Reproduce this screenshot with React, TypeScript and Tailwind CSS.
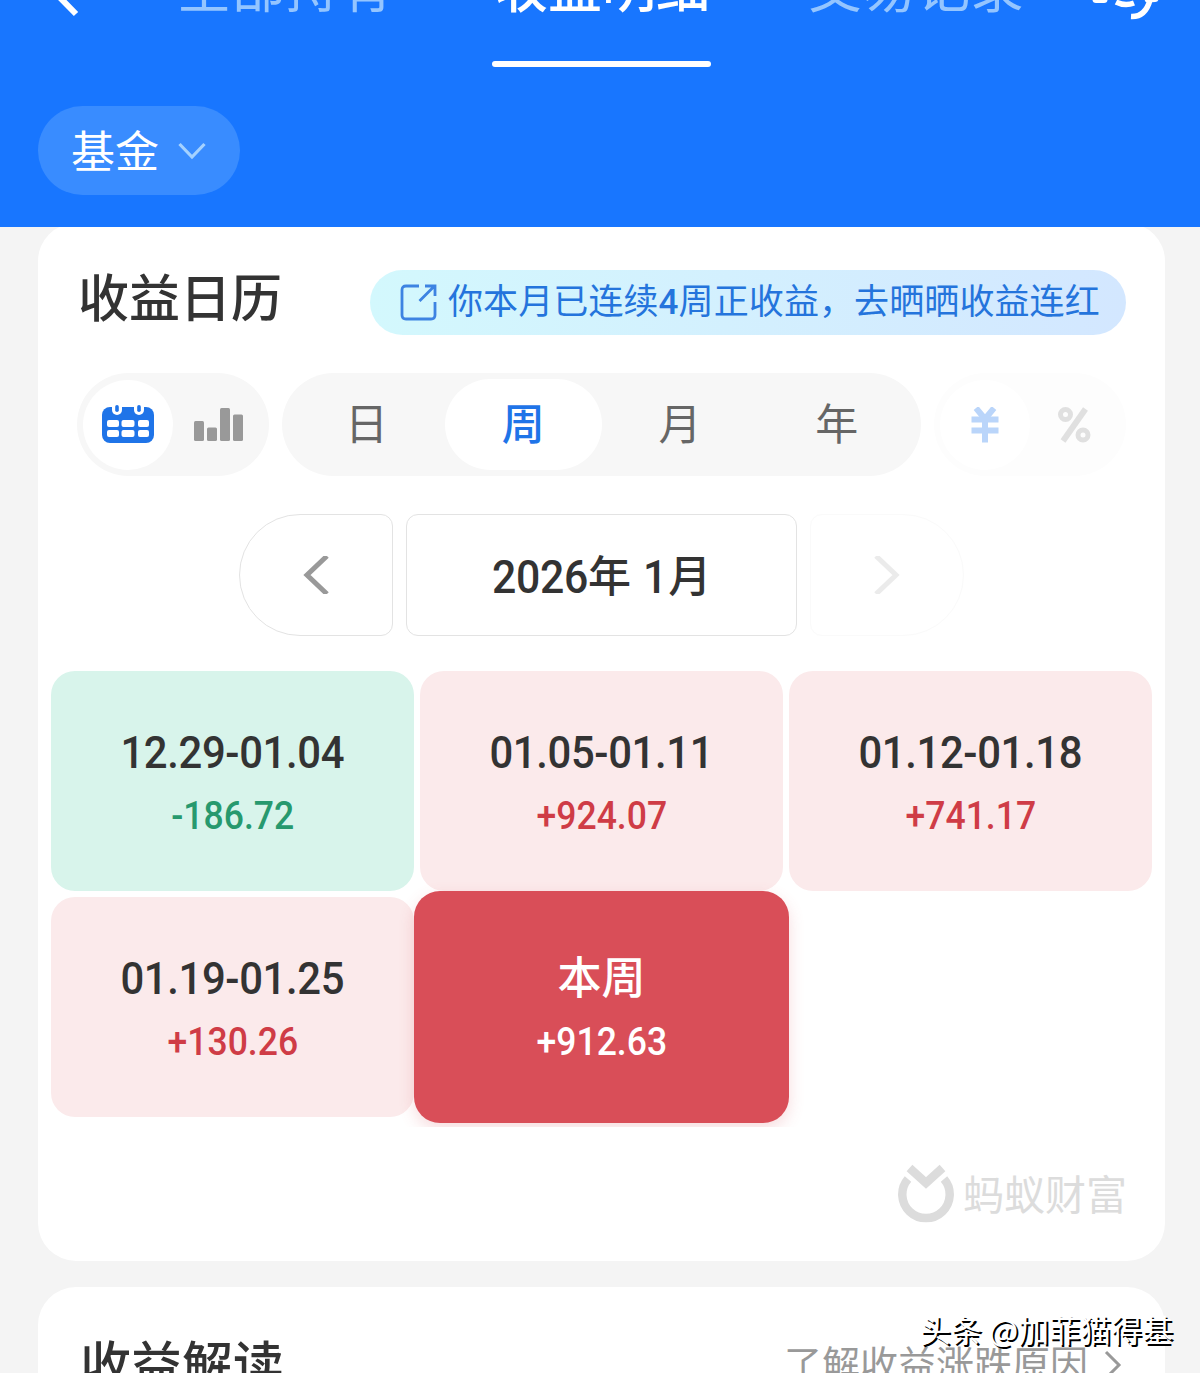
// App.tsx

import clsx from 'clsx';

interface Week {
  label: string;
  value: string;
  trend: 'up' | 'down' | 'current';
}

const WEEKS: Week[] = [
  { label: '12.29-01.04', value: '-186.72', trend: 'down' },
  { label: '01.05-01.11', value: '+924.07', trend: 'up' },
  { label: '01.12-01.18', value: '+741.17', trend: 'up' },
  { label: '01.19-01.25', value: '+130.26', trend: 'up' },
  { label: '本周', value: '+912.63', trend: 'current' },
];

const PERIODS = ['日', '周', '月', '年'];

function Header() {
  return (
    <header className="relative z-10 h-[227px] shrink-0 overflow-hidden bg-[#1876ff]">
      <div className="-mt-[42px] flex h-[54px] text-[54px] leading-none whitespace-nowrap">
        <svg className="mt-[9px] ml-[34px] h-[54px] w-[48px] shrink-0" viewBox="0 0 48 54" fill="none">
          <path d="M42 -2 L18 22.500 L42 47" stroke="#fff" strokeWidth="6" />
        </svg>
        <span className="ml-[95px] w-[216px] text-[#94c5ff]">全部持有</span>
        <span className="ml-[101px] w-[216px] font-medium text-white">收益明细</span>
        <span className="ml-[98px] w-[216px] text-[#94c5ff]">交易记录</span>
        <svg className="mt-[2px] ml-[64px] h-[62px] w-[72px] shrink-0 overflow-visible" viewBox="0 0 72 62" fill="none" stroke="#fff" strokeLinecap="round">
          <path d="M12 36 V20 A24 24 0 0 1 60 20 V36" strokeWidth="6" />
          <path d="M8 39.500 H16" strokeWidth="7" />
          <path d="M28 42 Q37 46.500 46 43" strokeWidth="5.500" strokeLinecap="butt" />
          <path d="M43 56.500 C53 57 59 51 62 40" strokeWidth="5.500" strokeLinecap="butt" />
          <path d="M60 39 L67 38.500" strokeWidth="7" />
        </svg>
      </div>
      <div className="mt-[49px] ml-[492px] h-[6px] w-[219px] rounded-full bg-white" />
      <button className="mt-[39px] ml-[38px] flex h-[89px] w-[202px] items-center rounded-full bg-[#398cff] pl-[33px] text-[44px] leading-none text-white">
        <span className="-mt-[4px]">基金</span>
        <svg className="ml-[19px] h-[18px] w-[28px]" viewBox="0 0 28 18" fill="none">
          <path d="M1.500 2 L14 15 L26.500 2" stroke="#a5d2ff" strokeWidth="3.200" />
        </svg>
      </button>
    </header>
  );
}

function ShareBanner() {
  return (
    <button className="flex h-[65px] w-[756px] items-center rounded-full bg-linear-to-r from-[#d3f8fd] to-[#d3e7ff] pl-[30px] text-[35px] leading-none whitespace-nowrap text-[#2474dc]">
      <svg className="mr-[11px] h-[37px] w-[37px]" viewBox="0 0 37 37" fill="none" stroke="#3d83e2" strokeWidth="2.800">
        <path d="M19 2 H6 Q2 2 2 6 V31 Q2 35 6 35 H31 Q35 35 35 31 V18" />
        <path d="M19.500 17 L34.500 2 M25 2 H35 V12" />
      </svg>
      <span className="-mt-[4px] tracking-[0.1px]">
        你本月已连续<span className="font-['Roboto'] font-medium">4</span>周正收益，去晒晒收益连红
      </span>
    </button>
  );
}

function CalendarIcon() {
  return (
    <svg className="h-[40px] w-[52px]" viewBox="0 0 52 40">
      <rect x="0" y="3" width="52" height="36" rx="8" fill="#1f74e8" />
      <g fill="#fff">
        <rect x="10" y="-3" width="10" height="14" rx="5" />
        <rect x="32" y="-3" width="10" height="14" rx="5" />
        <rect x="5" y="16" width="12" height="7" rx="2" />
        <rect x="19.500" y="16" width="13" height="7" rx="2" />
        <rect x="36" y="16" width="11" height="7" rx="2" />
        <rect x="5" y="26" width="12" height="7" rx="2" />
        <rect x="19.500" y="26" width="13" height="7" rx="2" />
        <rect x="36" y="26" width="11" height="7" rx="2" />
      </g>
      <rect x="13.200" y="1" width="3.600" height="7" rx="1.800" fill="#1f74e8" />
      <rect x="35.200" y="1" width="3.600" height="7" rx="1.800" fill="#1f74e8" />
    </svg>
  );
}

function Toolbar() {
  return (
    <div className="flex h-[103px] gap-[13px]">
      <div className="flex w-[192px] items-center rounded-full bg-[#f7f7f7] p-[6px]">
        <div className="flex h-[90px] w-[90px] items-center justify-center rounded-full bg-white pb-[2px]">
          <CalendarIcon />
        </div>
        <svg className="ml-[21px] h-[33px] w-[49px]" viewBox="0 0 49 33" fill="#999">
          <rect x="0" y="13" width="10" height="20" rx="1.500" />
          <rect x="13" y="19.500" width="10" height="13.500" rx="1.500" />
          <rect x="26" y="0" width="10" height="33" rx="1.500" />
          <rect x="39" y="6.500" width="10" height="26.500" rx="1.500" />
        </svg>
      </div>

      <div className="flex w-[639px] rounded-full bg-[#f7f7f7] p-[6px] text-[43px] leading-none">
        {PERIODS.map((period) => (
          <button
            key={period}
            className={clsx(
              'flex h-[91px] flex-1 items-center justify-center rounded-full pb-[6px]',
              period === '周' ? 'bg-white font-medium text-[#1f74e8]' : 'text-[#666]'
            )}
          >
            {period}
          </button>
        ))}
      </div>

      <div className="flex w-[192px] items-center rounded-full bg-[#fdfdfd] p-[6px]">
        <div className="flex h-[90px] w-[90px] items-center justify-center rounded-full bg-white">
          <svg className="h-[36px] w-[28px]" viewBox="0 0 28 36" fill="none" stroke="#bad5fa" strokeWidth="6">
            <path d="M5 1 L14 12 L23 1" strokeWidth="6" />
            <path d="M0.500 12.500 H27.500 M0.500 23.500 H27.500 M14 11 V35.500" />
          </svg>
        </div>
        <svg className="ml-[28px] h-[36px] w-[33px]" viewBox="0 0 33 36" fill="none" stroke="#e0e0e0">
          <path d="M27.500 2 L5 34" strokeWidth="6" />
          <circle cx="7.500" cy="7.500" r="5" strokeWidth="5" />
          <circle cx="25" cy="28" r="5" strokeWidth="5" />
        </svg>
      </div>
    </div>
  );
}

function MonthPicker() {
  return (
    <div className="ml-[201px] flex h-[122px] gap-[13px]">
      <button className="flex w-[154px] items-center justify-center rounded-l-[61px] rounded-r-[12px] border border-[#e3e3e3]">
        <svg className="h-[38px] w-[26px]" viewBox="0 0 26 38" fill="none">
          <path d="M24 0 L4 19 L24 38" stroke="#999" strokeWidth="5" />
        </svg>
      </button>
      <div className="flex w-[391px] items-center justify-center rounded-[12px] border border-[#e3e3e3] text-[43px] leading-none font-medium whitespace-pre text-[#333]">
        <span className="-mr-[7px] origin-left scale-x-[0.93] pt-[4px] font-['Roboto'] text-[46px] tracking-[-0.3px]">2026</span>
        <span className="-mt-[3px]">年</span>
        <span className="origin-left scale-x-[0.93] pt-[4px] pl-[13px] font-['Roboto'] text-[46px] tracking-[-2px]">1</span>
        <span className="-mt-[3px]">月</span>
      </div>
      <button className="flex w-[154px] items-center justify-center rounded-l-[12px] rounded-r-[61px] border border-[#fafafa]">
        <svg className="h-[38px] w-[26px]" viewBox="0 0 26 38" fill="none">
          <path d="M2 0 L22 19 L2 38" stroke="#ebebeb" strokeWidth="5" />
        </svg>
      </button>
    </div>
  );
}

function WeekCell({ week }: { week: Week }) {
  const isCurrent = week.trend === 'current';

  return (
    <div
      className={clsx(
        'flex flex-col items-center whitespace-nowrap',
        isCurrent && 'z-10 -m-[6px] rounded-[26px] bg-[#d94e58] pt-[64px] text-white shadow-[0_6px_16px_rgba(217,78,88,0.2)]',
        !isCurrent && 'rounded-[24px] pt-[58px] text-[#333]',
        week.trend === 'up' && 'bg-[#fbeaeb]',
        week.trend === 'down' && 'bg-[#d8f4eb]'
      )}
    >
      <div
        className={clsx(
          'h-[48px] leading-[48px] font-medium',
          isCurrent ? '-mt-[4px] mb-[4px] text-[44px]' : "scale-x-[0.93] font-['Roboto'] text-[45px] tracking-[-0.4px]"
        )}
      >
        {week.label}
      </div>
      <div
        className={clsx(
          "mt-[18px] scale-x-[0.935] font-['Roboto'] text-[38px] leading-[42px] font-medium",
          week.trend === 'up' && 'text-[#cf3c46]',
          week.trend === 'down' && 'text-[#27996e]'
        )}
      >
        {week.value}
      </div>
    </div>
  );
}

function Brand() {
  return (
    <div className="flex h-[60px] items-center justify-end pr-[38px] text-[#dcdcdc]">
      <svg className="h-[60px] w-[56px]" viewBox="0 0 56 60" fill="none" stroke="currentColor">
        <path d="M10 15 A23.700 23.700 0 1 0 46 15" strokeWidth="8.500" />
        <path d="M11.500 4 L28 19 L44.500 4" strokeWidth="8.500" />
      </svg>
      <span className="-mt-[4px] ml-[9px] text-[41px] leading-none">蚂蚁财富</span>
    </div>
  );
}

export default function App() {
  return (
    <div className="relative flex h-[1373px] w-[1200px] flex-col overflow-hidden bg-[#f4f4f4] font-['Noto_Sans_CJK_SC',sans-serif]">
      <Header />

      <section className="-mt-[4px] ml-[38px] h-[1038px] w-[1127px] shrink-0 rounded-[38px] bg-white pt-[47px]">
        <div className="flex h-[65px] items-center justify-between pr-[39px] pl-[40px]">
          <h2 className="-mt-[14px] text-[51px] leading-none font-medium text-[#333]">收益日历</h2>
          <ShareBanner />
        </div>
        <div className="mt-[38px] pl-[39px]">
          <Toolbar />
        </div>
        <div className="mt-[38px]">
          <MonthPicker />
        </div>
        <div className="mt-[29px] grid h-[462px] grid-cols-3 grid-rows-[220px_220px] gap-[6px] overflow-hidden px-[13px] pt-[6px]">
          {WEEKS.map((week) => (
            <WeekCell key={week.label} week={week} />
          ))}
        </div>
        <div className="mt-[37px]">
          <Brand />
        </div>
      </section>

      <section className="mt-[26px] ml-[38px] flex h-[200px] w-[1127px] shrink-0 items-start justify-between rounded-[38px] bg-white pt-[50px] pr-[43px] pl-[42px]">
        <h2 className="text-[51px] leading-none font-medium text-[#333]">收益解读</h2>
        <div className="mt-[6px] flex items-center text-[38px] leading-none text-[#999]">
          了解收益涨跌原因
          <svg className="mt-[6px] ml-[16px] h-[30px] w-[18px]" viewBox="0 0 18 30" fill="none">
            <path d="M2 2 L15 15 L2 28" stroke="#999" strokeWidth="3" />
          </svg>
        </div>
      </section>

      <div className="absolute top-[1313px] right-[27px] z-20 text-[31px] leading-none whitespace-nowrap text-white [text-shadow:2px_2px_0_#000]">
        头条 @加菲猫得基
      </div>
    </div>
  );
}
